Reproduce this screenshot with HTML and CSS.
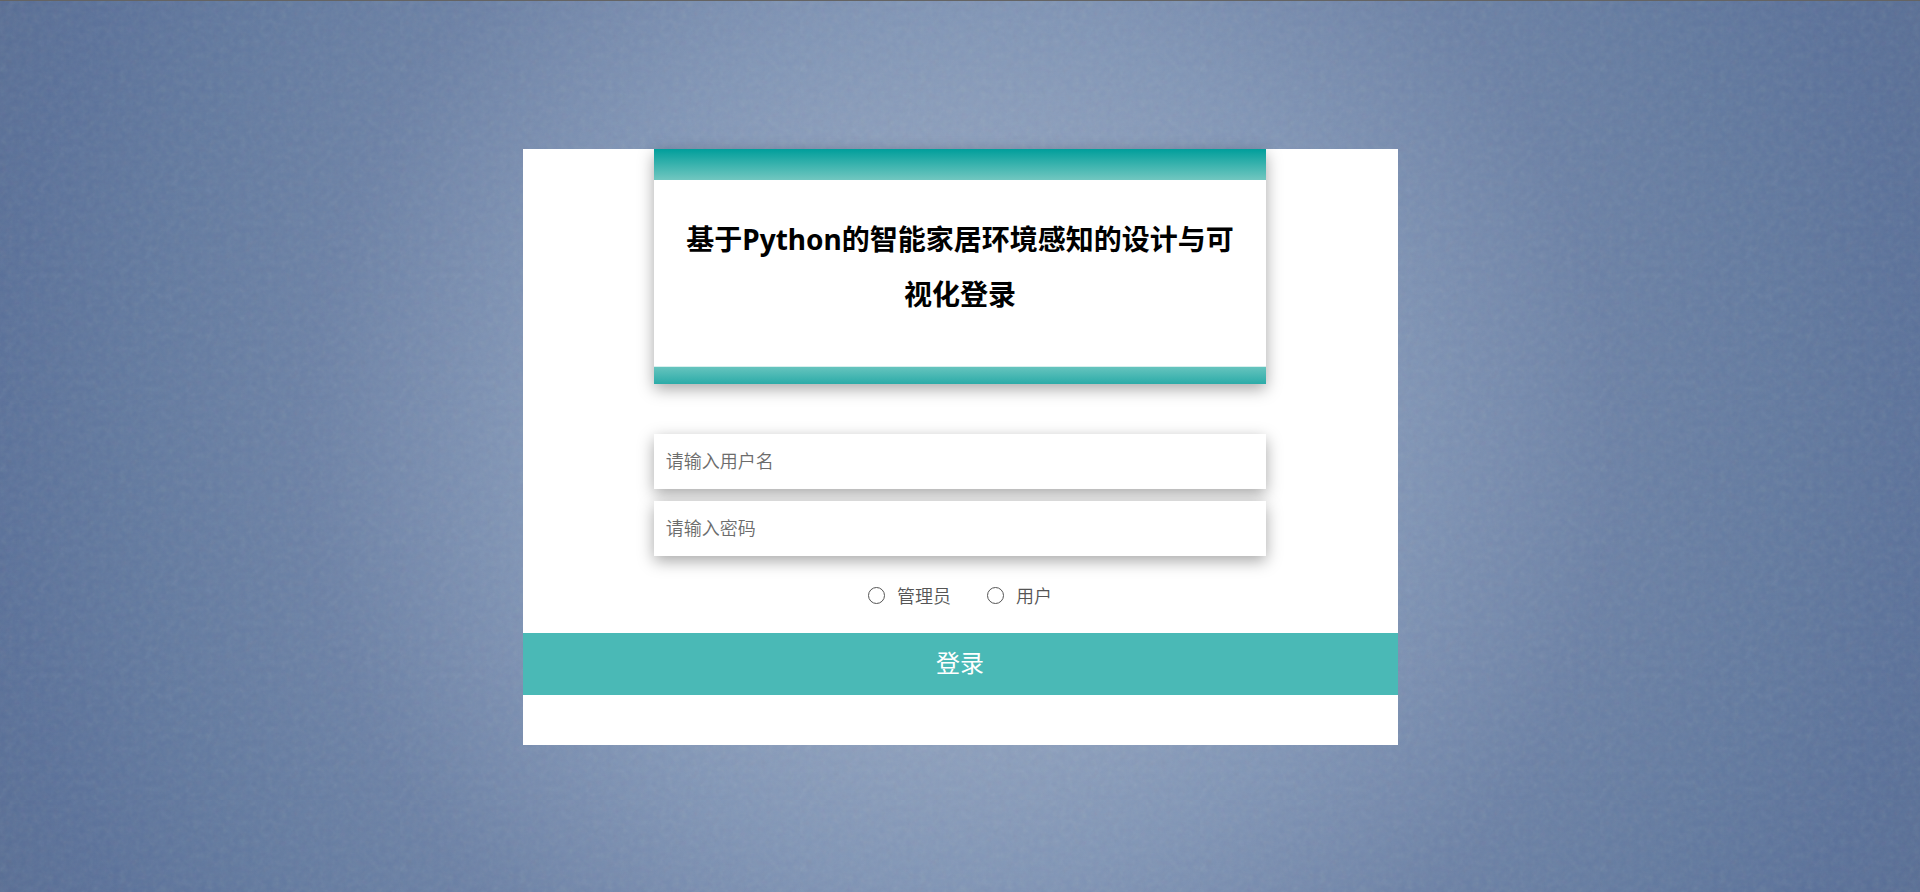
FILE: index.html
```html
<!DOCTYPE html>
<html lang="zh-CN">
<head>
  <meta charset="UTF-8">
  <meta name="viewport" content="width=device-width, initial-scale=1.0">
  <title>登录</title>
  <link rel="stylesheet" href="styles.css">
</head>
<body>
  <form class="login" id="loginForm">
    <!-- Title -->
    <div class="login-header">
      <h1>基于Python的智能家居环境感知的设计与可视化登录</h1>
    </div>

    <!-- Account -->
    <div class="fields">
      <input type="text" name="username" placeholder="请输入用户名" aria-label="用户名" required>
      <input type="password" name="password" placeholder="请输入密码" aria-label="密码" required>
    </div>

    <!-- Role -->
    <div class="roles">
      <label for="roleAdmin"><input type="radio" id="roleAdmin" name="role" value="admin">管理员</label>
      <label for="roleUser"><input type="radio" id="roleUser" name="role" value="user">用户</label>
    </div>

    <button type="submit">登录</button>
  </form>
</body>
</html>
```

FILE: styles.css
```css
* {
  box-sizing: border-box;
}

body {
  font-family: "Noto Sans", "Noto Sans CJK SC", sans-serif;
  display: flex;
  justify-content: center;
  align-items: center;
  min-height: 100vh;
  margin: 0;
  border-top: 1px solid #646464;
  background-color: #5b7199;
  /* fine paper grain over a soft spotlight */
  background-image:
    url("data:image/svg+xml,%3Csvg xmlns='http://www.w3.org/2000/svg' width='400' height='400'%3E%3Cfilter id='n'%3E%3CfeTurbulence type='fractalNoise' baseFrequency='0.15' numOctaves='3' stitchTiles='stitch'/%3E%3CfeColorMatrix type='saturate' values='0.4'/%3E%3C/filter%3E%3Crect width='400' height='400' filter='url(%23n)' opacity='0.12'/%3E%3C/svg%3E"),
    radial-gradient(circle farthest-corner, #94a5c0 0%, #8b9ebc 29%, #8095b6 41%, #768bae 51%, #6a80a5 62%, #61799f 77%, #597099 91%, #576d94 100%);
}

.login {
  width: 90%;
  max-width: 875px;
  padding-bottom: 50px;
  background: #fff;
}

.login-header {
  width: 70%;
  margin: 0 auto 50px;
  text-align: center;
  box-shadow: 0 5px 15px rgba(0, 0, 0, 0.35);
}

.login-header::before,
.login-header::after {
  content: "";
  display: block;
}

.login-header::before {
  height: 31px;
  background: linear-gradient(#009e9b, #72c7c0);
}

.login-header::after {
  height: 17px;
  background: linear-gradient(#66c4be, #2baba8);
}

.login-header h1 {
  margin: 0;
  padding: 32px 20px 44px;
  border-bottom: 1px solid #d8f0ee;
  color: #000;
  font-size: 28px;
  font-weight: bold;
  line-height: 55px;
}

.fields {
  display: flex;
  flex-direction: column;
  gap: 12px;
  width: 70%;
  margin: 0 auto;
}

.fields input {
  width: 100%;
  height: 55px;
  padding: 0 12px;
  border: none;
  background: #fff;
  color: #333;
  font-family: inherit;
  font-size: 18px;
  font-weight: 350;
  box-shadow: 0 5px 15px rgba(0, 0, 0, 0.35);
}

.fields input::placeholder {
  color: #6c6c6c;
}

.roles {
  display: flex;
  justify-content: center;
  gap: 36px;
  padding: 28px 0 25px;
  color: #555;
  font-size: 18px;
  font-weight: 350;
  line-height: 24px;
}

.roles label {
  display: flex;
  align-items: center;
  gap: 12px;
  cursor: pointer;
}

.roles input {
  appearance: none;
  width: 17px;
  height: 17px;
  margin: 0;
  border: 1px solid #555;
  border-radius: 50%;
}

.roles input:checked {
  border: 5px solid #4ab9b6;
}

button {
  display: block;
  width: 100%;
  height: 62px;
  padding: 0 0 4px;
  border: none;
  background-color: #4ab9b6;
  color: #fff;
  font-family: inherit;
  font-size: 24px;
  cursor: pointer;
}

button:hover {
  background-color: #2baba8;
}
```
